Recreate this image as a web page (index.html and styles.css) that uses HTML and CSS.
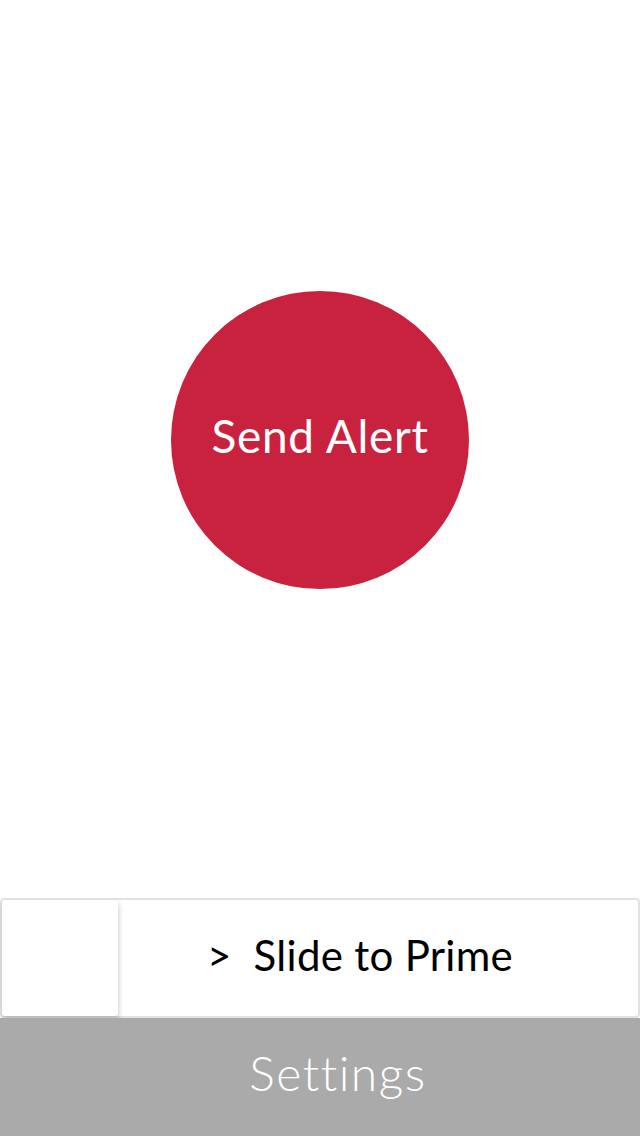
FILE: index.html
```html
<!DOCTYPE html>
<html>
<head>
<meta charset="utf-8">
<link rel="stylesheet" href="styles.css">
</head>
<body>
<div class="app">
  <main class="main">
    <button class="alert-btn">Send Alert</button>
  </main>
  <div class="slider">
    <div class="thumb"></div>
    <div class="slide-label"><span class="chev">&gt;</span>Slide to Prime</div>
  </div>
  <div class="settings">Settings</div>
</div>
</body>
</html>
```
FILE: styles.css
```css
html, body {
  margin: 0;
  padding: 0;
  background: #ffffff;
}
.app {
  width: 640px;
  height: 1136px;
  display: flex;
  flex-direction: column;
  font-family: Lato, "Open Sans", sans-serif;
  font-variant-ligatures: none;
}
.main {
  flex: 1;
  display: flex;
  align-items: center;
  justify-content: center;
  padding-bottom: 18px;
}
.alert-btn {
  width: 298px;
  height: 298px;
  border-radius: 50%;
  border: none;
  background: #c9223f;
  color: #ffffff;
  font-family: Lato, sans-serif;
  font-variant-ligatures: none;
  font-size: 46px;
  font-weight: 400;
  letter-spacing: 0.7px;
  padding: 0 0 9px 0;
}
.slider {
  height: 116px;
  border: 2px solid #e2e2e6;
  border-radius: 4px;
  display: flex;
  align-items: center;
  background: #fff;
}
.thumb {
  width: 116px;
  height: 116px;
  background: #fff;
  border-radius: 3px;
  box-shadow: 1px 3px 5px rgba(0,0,0,0.2);
  flex: none;
}
.slide-label {
  flex: 1;
  text-align: center;
  font-size: 42px;
  color: #000;
  padding: 0 36px 6px 0;
  letter-spacing: 0.3px;
}
.chev {
  margin-right: 22px;
}
.settings {
  height: 118px;
  background: #aaaaaa;
  color: #ffffff;
  font-size: 48px;
  font-weight: 300;
  letter-spacing: 1.5px;
  display: flex;
  align-items: center;
  justify-content: center;
  padding: 0 0 10px 36px;
  box-sizing: border-box;
}
```
